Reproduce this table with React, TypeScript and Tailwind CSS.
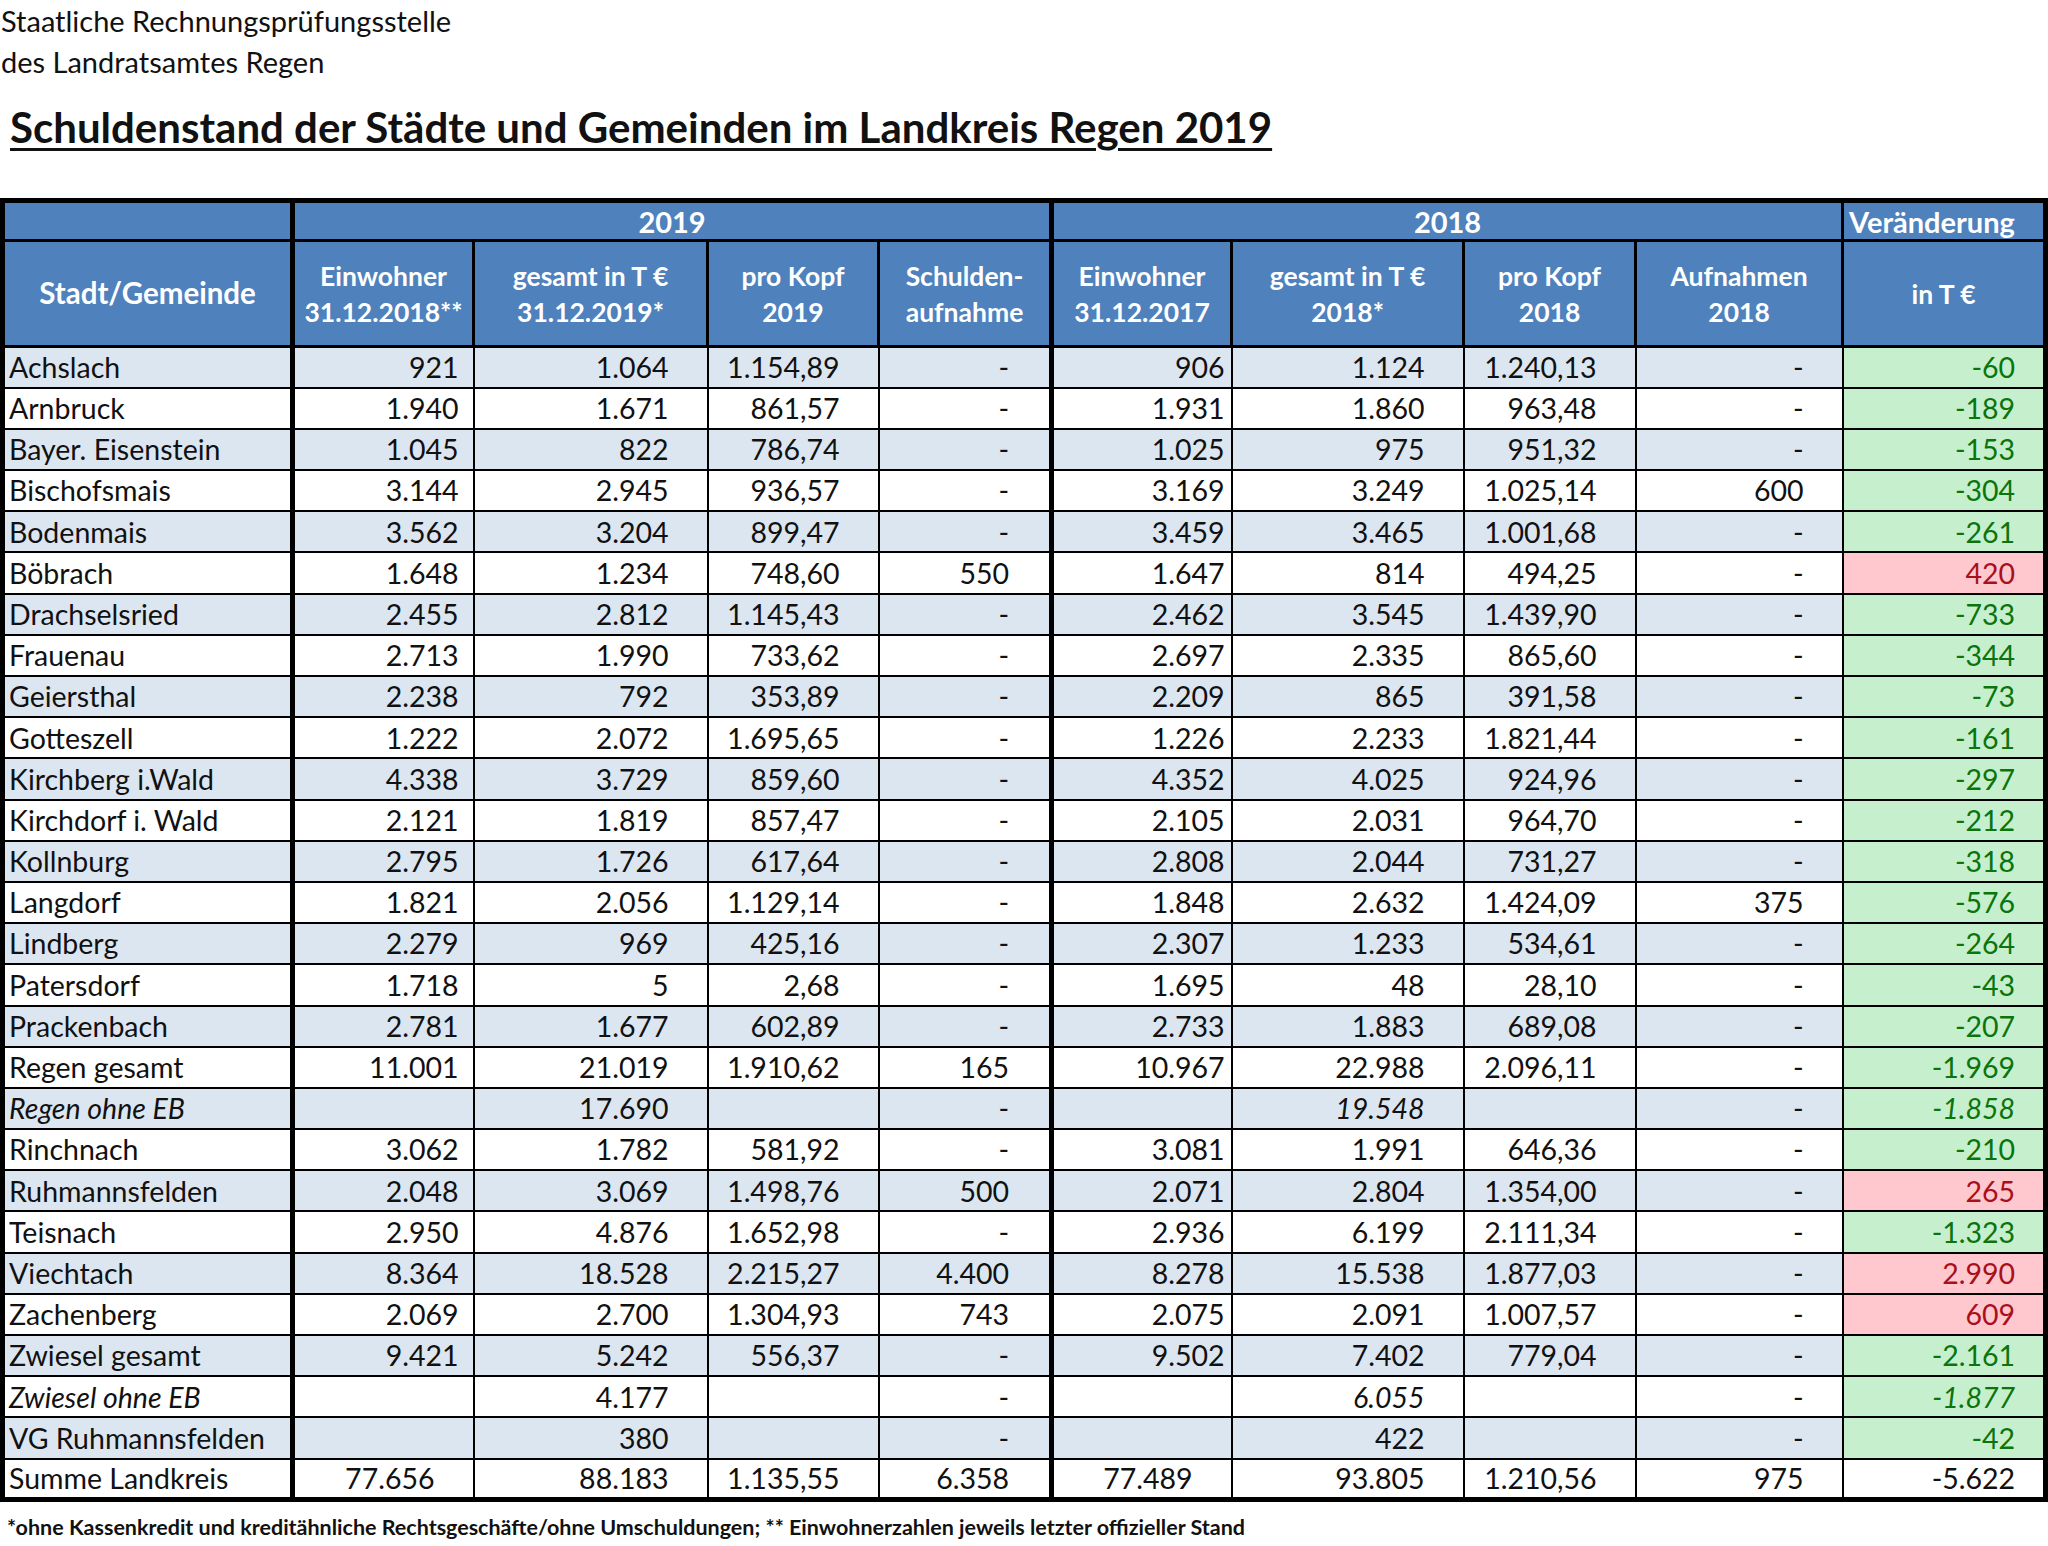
import React from 'react';

type Row = {
  name: string;
  v: string[];
  italic?: boolean;
  tone: 'good' | 'bad' | 'none';
  sum?: boolean;
};

const rows: Row[] = [
  { name: 'Achslach', v: ['921', '1.064', '1.154,89', '-', '906', '1.124', '1.240,13', '-', '-60'], tone: 'good' },
  { name: 'Arnbruck', v: ['1.940', '1.671', '861,57', '-', '1.931', '1.860', '963,48', '-', '-189'], tone: 'good' },
  { name: 'Bayer. Eisenstein', v: ['1.045', '822', '786,74', '-', '1.025', '975', '951,32', '-', '-153'], tone: 'good' },
  { name: 'Bischofsmais', v: ['3.144', '2.945', '936,57', '-', '3.169', '3.249', '1.025,14', '600', '-304'], tone: 'good' },
  { name: 'Bodenmais', v: ['3.562', '3.204', '899,47', '-', '3.459', '3.465', '1.001,68', '-', '-261'], tone: 'good' },
  { name: 'Böbrach', v: ['1.648', '1.234', '748,60', '550', '1.647', '814', '494,25', '-', '420'], tone: 'bad' },
  { name: 'Drachselsried', v: ['2.455', '2.812', '1.145,43', '-', '2.462', '3.545', '1.439,90', '-', '-733'], tone: 'good' },
  { name: 'Frauenau', v: ['2.713', '1.990', '733,62', '-', '2.697', '2.335', '865,60', '-', '-344'], tone: 'good' },
  { name: 'Geiersthal', v: ['2.238', '792', '353,89', '-', '2.209', '865', '391,58', '-', '-73'], tone: 'good' },
  { name: 'Gotteszell', v: ['1.222', '2.072', '1.695,65', '-', '1.226', '2.233', '1.821,44', '-', '-161'], tone: 'good' },
  { name: 'Kirchberg i.Wald', v: ['4.338', '3.729', '859,60', '-', '4.352', '4.025', '924,96', '-', '-297'], tone: 'good' },
  { name: 'Kirchdorf i. Wald', v: ['2.121', '1.819', '857,47', '-', '2.105', '2.031', '964,70', '-', '-212'], tone: 'good' },
  { name: 'Kollnburg', v: ['2.795', '1.726', '617,64', '-', '2.808', '2.044', '731,27', '-', '-318'], tone: 'good' },
  { name: 'Langdorf', v: ['1.821', '2.056', '1.129,14', '-', '1.848', '2.632', '1.424,09', '375', '-576'], tone: 'good' },
  { name: 'Lindberg', v: ['2.279', '969', '425,16', '-', '2.307', '1.233', '534,61', '-', '-264'], tone: 'good' },
  { name: 'Patersdorf', v: ['1.718', '5', '2,68', '-', '1.695', '48', '28,10', '-', '-43'], tone: 'good' },
  { name: 'Prackenbach', v: ['2.781', '1.677', '602,89', '-', '2.733', '1.883', '689,08', '-', '-207'], tone: 'good' },
  { name: 'Regen gesamt', v: ['11.001', '21.019', '1.910,62', '165', '10.967', '22.988', '2.096,11', '-', '-1.969'], tone: 'good' },
  { name: 'Regen ohne EB', v: ['', '17.690', '', '-', '', '19.548', '', '-', '-1.858'], tone: 'good', italic: true },
  { name: 'Rinchnach', v: ['3.062', '1.782', '581,92', '-', '3.081', '1.991', '646,36', '-', '-210'], tone: 'good' },
  { name: 'Ruhmannsfelden', v: ['2.048', '3.069', '1.498,76', '500', '2.071', '2.804', '1.354,00', '-', '265'], tone: 'bad' },
  { name: 'Teisnach', v: ['2.950', '4.876', '1.652,98', '-', '2.936', '6.199', '2.111,34', '-', '-1.323'], tone: 'good' },
  { name: 'Viechtach', v: ['8.364', '18.528', '2.215,27', '4.400', '8.278', '15.538', '1.877,03', '-', '2.990'], tone: 'bad' },
  { name: 'Zachenberg', v: ['2.069', '2.700', '1.304,93', '743', '2.075', '2.091', '1.007,57', '-', '609'], tone: 'bad' },
  { name: 'Zwiesel gesamt', v: ['9.421', '5.242', '556,37', '-', '9.502', '7.402', '779,04', '-', '-2.161'], tone: 'good' },
  { name: 'Zwiesel ohne EB', v: ['', '4.177', '', '-', '', '6.055', '', '-', '-1.877'], tone: 'good', italic: true },
  { name: 'VG Ruhmannsfelden', v: ['', '380', '', '-', '', '422', '', '-', '-42'], tone: 'good' },
  { name: 'Summe Landkreis', v: ['77.656', '88.183', '1.135,55', '6.358', '77.489', '93.805', '1.210,56', '975', '-5.622'], tone: 'none', sum: true },
];

const pads = ['pr-[14px]', 'pr-[38px]', 'pr-[38px]', 'pr-[40px]', 'pr-[6px]', 'pr-[38px]', 'pr-[38px]', 'pr-[38px]', 'pr-[28px]'];
const sumPads = ['pr-[38px]', 'pr-[38px]', 'pr-[38px]', 'pr-[40px]', 'pr-[38px]', 'pr-[38px]', 'pr-[38px]', 'pr-[38px]', 'pr-[28px]'];
// which cells go italic on the "ohne EB" rows
const italicCols = [5, 8];

const colWidths = [290, 181, 234, 171, 173, 180, 232, 172, 207, 203];

const th = 'border-[3px] border-black bg-[#4f81bd] text-white font-bold text-center align-middle';
const grp = `${th} text-[29px] leading-none`;
const sub = `${th} text-[26.5px] leading-[36px]`;

export default function App() {
  return (
    <div className="w-[2048px] min-h-[1546px] bg-white text-[#111] font-['Lato',sans-serif]">
      <div className="pl-[1px] text-[29px] leading-[41px]">
        <div>Staatliche Rechnungsprüfungsstelle</div>
        <div>des Landratsamtes Regen</div>
      </div>
      <h1 className="pl-[10px] mt-[20px] text-[42px] leading-[50px] font-bold underline decoration-[3px] underline-offset-[5px]">
        Schuldenstand der Städte und Gemeinden im Landkreis Regen 2019
      </h1>

      <table className="mt-[46px] w-[2048px] table-fixed border-collapse border-[5px] border-black">
        <colgroup>
          {colWidths.map((w, i) => (
            <col key={i} style={{ width: w }} />
          ))}
        </colgroup>
        <thead>
          <tr className="h-[40px]">
            <th className={grp}></th>
            <th colSpan={4} className={`${grp} border-l-[5px]`}>2019</th>
            <th colSpan={4} className={`${grp} border-l-[5px]`}>2018</th>
            <th className={`${grp} !text-left pl-[5px]`}>Veränderung</th>
          </tr>
          <tr className="h-[106px]">
            <th className={`${th} text-[29.5px]`}>Stadt/Gemeinde</th>
            <th className={`${sub} border-l-[5px]`}>Einwohner<br />31.12.2018**</th>
            <th className={sub}>gesamt in T €<br />31.12.2019*</th>
            <th className={sub}>pro Kopf<br />2019</th>
            <th className={sub}>Schulden-<br />aufnahme</th>
            <th className={`${sub} border-l-[5px]`}>Einwohner<br />31.12.2017</th>
            <th className={sub}>gesamt in T €<br />2018*</th>
            <th className={sub}>pro Kopf<br />2018</th>
            <th className={sub}>Aufnahmen<br />2018</th>
            <th className={sub}>in T €</th>
          </tr>
        </thead>
        <tbody className="text-[28.5px] leading-none">
          {rows.map((r, ri) => {
            const bg = ri % 2 === 0 ? 'bg-[#dce6f1]' : 'bg-white';
            return (
              <tr key={r.name} className={`h-[41.2px] ${bg}`}>
                <td className={`border-2 border-black pl-[4px] whitespace-nowrap ${r.italic ? 'italic' : ''}`}>{r.name}</td>
                {r.v.map((val, ci) => {
                  const last = ci === 8;
                  const thick = ci === 0 || ci === 4 ? 'border-l-[5px]' : '';
                  const it = r.italic && italicCols.includes(ci) ? 'italic' : '';
                  let tone = '';
                  if (last && r.tone === 'good') tone = 'bg-[#c6efce] text-[#0b740b]';
                  if (last && r.tone === 'bad') tone = 'bg-[#ffc7ce] text-[#a8101a]';
                  if (last && r.tone === 'none') tone = 'bg-white';
                  const pad = r.sum ? sumPads[ci] : pads[ci];
                  return (
                    <td key={ci} className={`border-2 border-black text-right whitespace-nowrap ${pad} ${thick} ${it} ${tone}`}>
                      {val}
                    </td>
                  );
                })}
              </tr>
            );
          })}
        </tbody>
      </table>

      <p className="pl-[7px] mt-[11px] text-[21.5px] leading-[28px] font-bold">
        *ohne Kassenkredit und kreditähnliche Rechtsgeschäfte/ohne Umschuldungen; ** Einwohnerzahlen jeweils letzter offizieller Stand
      </p>
    </div>
  );
}
